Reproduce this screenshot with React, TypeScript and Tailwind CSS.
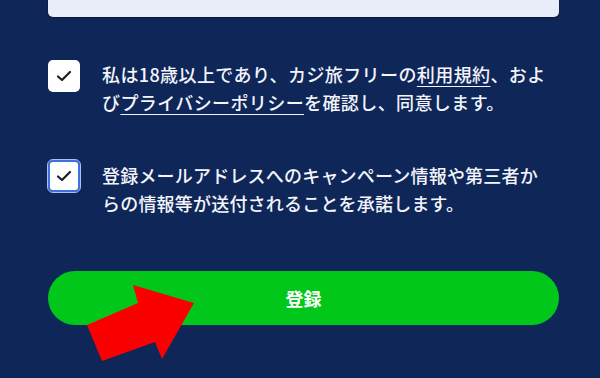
import React from "react";

function Check({ focused }: { focused?: boolean }) {
  return (
    <div
      className={
        "flex h-[32px] w-[32px] shrink-0 items-center justify-center rounded-[5px] bg-white " +
        (focused ? "border-2 border-[#3d72de] outline outline-1 outline-[#a9c0f0]" : "")
      }
    >
      <svg width="16" height="12" viewBox="0 0 16 12" fill="none">
        <path d="M2 6.5 L6 10 L14 2" stroke="#1d1d2b" strokeWidth="2.2" strokeLinecap="round" strokeLinejoin="round" />
      </svg>
    </div>
  );
}

export default function App() {
  return (
    <div
      className="relative h-[378px] w-[600px] overflow-hidden bg-[#0f2658] text-[#f3f5fb]"
      style={{ fontFamily: '"Noto Sans CJK JP", "Noto Sans", sans-serif' }}
    >
      <div className="flex flex-col pl-[48px] pr-[41px]">
        <div className="mt-[-31px] h-[48px] w-full rounded-[5px] bg-[#e9edfa] shadow-[0_1px_2px_rgba(0,0,0,0.4)]" />

        <div className="mt-[43px] flex items-start gap-[22px]">
          <Check />
          <p className="text-[18px] font-medium leading-[28px] tracking-[0.4px] whitespace-nowrap">
            私は18歳以上であり、カジ旅フリーの
            <span className="underline underline-offset-[4px] decoration-1">利用規約</span>
            、およ
            <br />
            び<span className="underline underline-offset-[4px] decoration-1">プライバシーポリシー</span>
            を確認し、同意します。
          </p>
        </div>

        <div className="mt-[44px] flex items-start gap-[22px]">
          <Check focused />
          <p className="mt-[1px] text-[18px] font-medium leading-[28px] tracking-[0.2px] whitespace-nowrap">
            登録メールアドレスへのキャンペーン情報や第三者か
            <br />
            らの情報等が送付されることを承諾します。
          </p>
        </div>

        <button className="mt-[54px] flex h-[54px] w-full items-center justify-center rounded-full bg-[#02c71b] text-[18px] font-bold text-white">
          登録
        </button>
      </div>

      <svg className="absolute left-0 top-0" width="600" height="378" viewBox="0 0 600 378">
        <polygon
          points="87,325 138,303 133,285 194,303 162,359 155,342 102,361"
          fill="#fb0000"
        />
      </svg>
    </div>
  );
}
